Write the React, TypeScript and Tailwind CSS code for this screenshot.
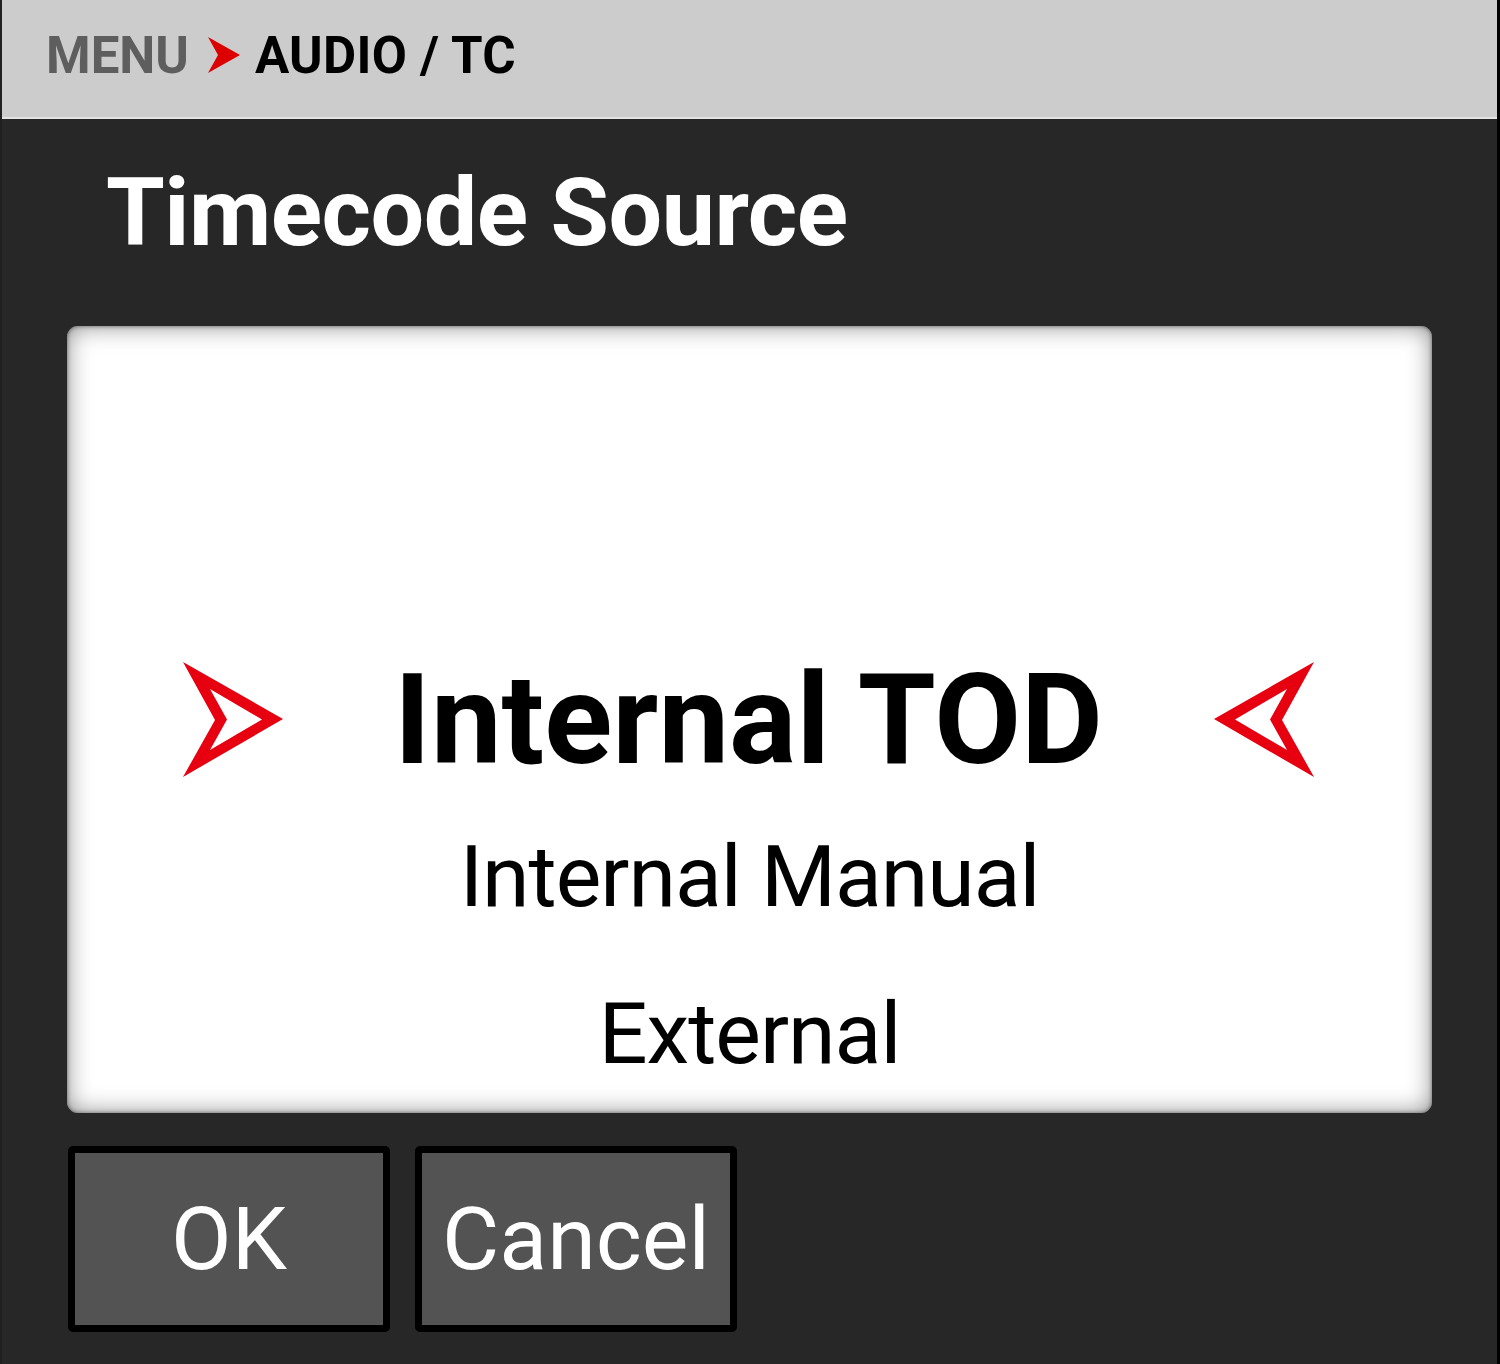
import React from "react";

const font = { fontFamily: "Roboto, 'Noto Sans', 'Liberation Sans', sans-serif" };

function PickArrow({ flip }: { flip?: boolean }) {
  return (
    <svg
      width="100"
      height="115"
      viewBox="0 0 100 115"
      className={flip ? "-scale-x-100" : ""}
    >
      <path
        fillRule="evenodd"
        fill="#e60010"
        d="M0 0 L100 57 L0 115 L32 58 Z M27 27 L44 57.5 L27 88 L79 57.5 Z"
      />
    </svg>
  );
}

function HeaderArrow() {
  return (
    <svg width="32" height="36" viewBox="0 0 32 36">
      <path fill="#dd0000" d="M0 0 L32 18 L0 36 L10 18 Z" />
    </svg>
  );
}

export default function App() {
  return (
    <div
      className="w-[1500px] h-[1364px] bg-[#272727] border-l-2 border-l-[#202020] border-r-[3px] border-r-black flex flex-col overflow-hidden"
      style={font}
    >
      {/* Header */}
      <div className="h-[119px] shrink-0 bg-[#cccccc] border-b-2 border-b-[#e2e2e2] flex items-start pt-[30px] pl-[44px]">
        <span className="text-[51px] leading-none font-bold text-[#5e5e5e]">MENU</span>
        <span className="ml-[19px] mr-[15px] mt-[7px] flex">
          <HeaderArrow />
        </span>
        <span className="text-[51px] leading-none font-bold text-black tracking-[0.3px]">AUDIO / TC</span>
      </div>

      {/* Title */}
      <div className="pl-[104px] pt-[46px] h-[207px] shrink-0">
        <div className="text-[95px] leading-none font-bold text-white tracking-[-0.5px]">
          Timecode Source
        </div>
      </div>

      {/* Picker panel */}
      <div className="ml-[65px] w-[1365px] h-[787px] shrink-0 bg-white rounded-[11px] shadow-[inset_0_0_4px_rgba(0,0,0,0.5),inset_0_0_24px_rgba(0,0,0,0.45)] flex flex-col">
        <div className="flex-1" />
        <div className="flex-1" />
        <div className="flex-1 flex items-center justify-between pl-[116px] pr-[118px]">
          <PickArrow />
          <div className="text-[126px] leading-none font-bold text-black">
            Internal TOD
          </div>
          <PickArrow flip />
        </div>
        <div className="flex-1 flex items-center justify-center">
          <div className="text-[86px] leading-none text-black tracking-[-1px]">Internal Manual</div>
        </div>
        <div className="flex-1 flex items-center justify-center">
          <div className="text-[86px] leading-none text-black tracking-[-1px]">External</div>
        </div>
      </div>

      {/* Buttons */}
      <div className="flex gap-[25px] ml-[66px] mt-[33px]">
        <button className="w-[322px] h-[186px] bg-[#535353] border-[7px] border-black rounded-[5px] flex items-center justify-center text-white text-[88px] leading-none">
          OK
        </button>
        <button className="w-[322px] h-[186px] bg-[#535353] border-[7px] border-black rounded-[5px] flex items-center justify-center text-white text-[88px] leading-none">
          Cancel
        </button>
      </div>
    </div>
  );
}
